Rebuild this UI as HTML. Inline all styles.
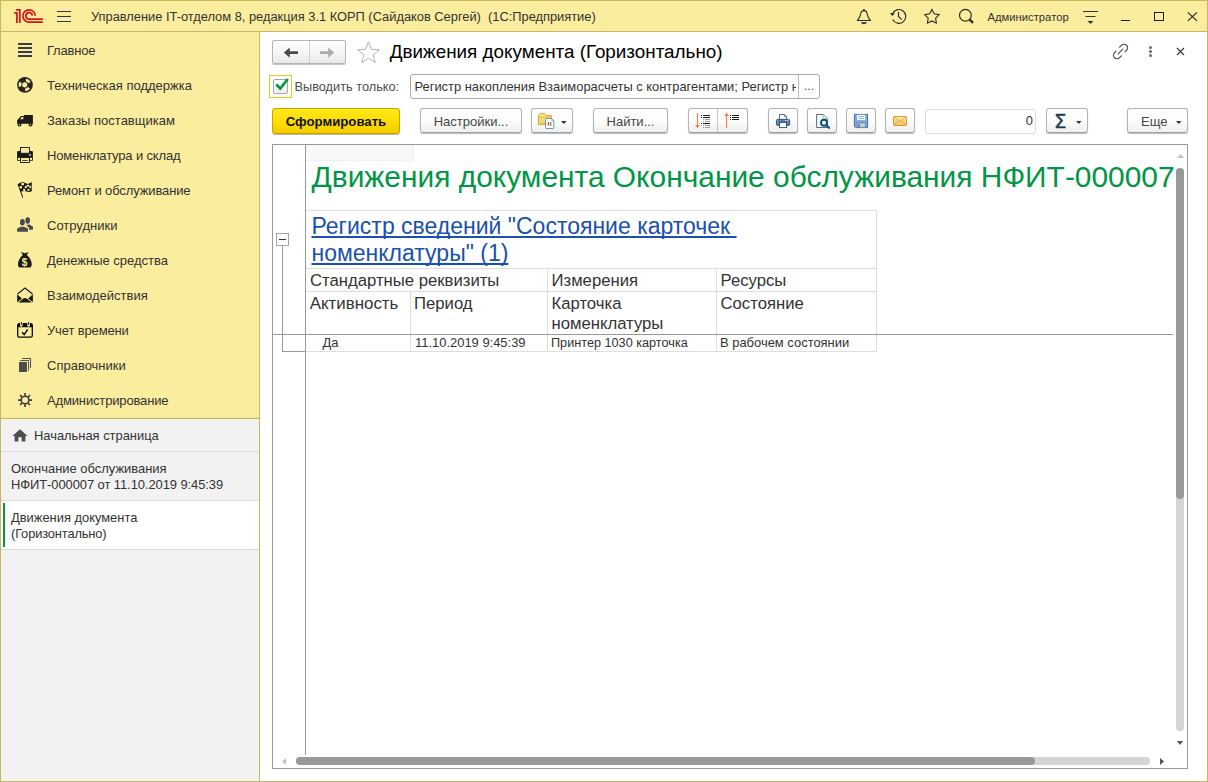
<!DOCTYPE html>
<html lang="ru">
<head>
<meta charset="utf-8">
<title>Движения документа (Горизонтально)</title>
<style>
*{box-sizing:border-box;margin:0;padding:0}
html,body{width:1208px;height:782px;overflow:hidden;background:#fff}
body{font-family:"Liberation Sans",sans-serif;color:#333;position:relative}
.abs{position:absolute}
#win{position:absolute;left:0;top:0;width:1208px;height:782px;border:1px solid #c7b65e;pointer-events:none;z-index:50}
#topbar{position:absolute;left:0;top:0;width:1208px;height:32px;background:#fbed9e;border-bottom:1px solid #c8b86a}
#side{position:absolute;left:0;top:32px;width:260px;height:387px;background:#fbed9e;border-right:1px solid #c7b65e}
#open{position:absolute;left:0;top:418px;width:260px;height:364px;background:#f2f2f2;border-right:1px solid #c7b65e;border-top:1px solid #c0b05a}
.t{position:absolute;white-space:pre;line-height:20px}
.si{position:absolute;left:47px;font-size:13px;color:#333;white-space:pre;line-height:20px}
.ic{position:absolute;left:17px;width:16px;height:16px}
.sep{position:absolute;left:1px;width:258px;height:1px;background:#dcdcdc}
.btn{position:absolute;top:108px;height:25px;border:1px solid #b3b3b3;border-bottom-color:#a2a2a2;border-radius:3px;background:linear-gradient(#ffffff,#fdfdfd 50%,#efefef);box-shadow:0 1px 1px rgba(0,0,0,.28);font-size:13px;color:#444;text-align:center;line-height:25px;white-space:pre}
.gl{position:absolute;background:#dedede}
</style>
</head>
<body>
<div id="topbar">
<svg class="abs" style="left:10px;top:6px" width="36" height="20" viewBox="10 6 36 20">
 <g fill="none" stroke="#d7131b" stroke-width="1.7">
  <path d="M14.1 12.9H16.85V22.9"/>
  <path d="M16.1 9.8H19.8V22.9"/>
  <path d="M35.3 15.8A6.2 6.2 0 1 0 29.1 22.2H42.9"/>
  <path d="M32.3 15.6A3.2 3.2 0 1 0 29.1 19.1H42.9"/>
 </g>
</svg>
<svg class="abs" style="left:57px;top:10px" width="15" height="13" viewBox="0 0 15 13"><path d="M0 1.5H14M0 6.5H14M0 11.5H14" stroke="#333a45" stroke-width="1.1" fill="none"/></svg>
<div class="t" style="left:91px;top:7px;font-size:12.85px;color:#333">Управление IT-отделом 8, редакция 3.1 КОРП (Сайдаков Сергей)  (1С:Предприятие)</div>
<svg class="abs" style="left:856px;top:8px" width="16" height="17" viewBox="0 0 16 17"><path d="M1.3 12.45Q3 10.8 3.7 8.8Q4.5 6.8 4.9 5Q5.4 2.6 7.9 2.6Q10.4 2.6 10.9 5Q11.3 6.8 12.1 8.8Q12.8 10.8 14.5 12.45Z" fill="none" stroke="#2b2b2b" stroke-width="1.1" stroke-linejoin="round"/><circle cx="7.9" cy="1.9" r="0.95" fill="#2b2b2b"/><path d="M4.8 14.2H11Q10.2 16.3 7.9 16.3Q5.6 16.3 4.8 14.2Z" fill="#2b2b2b"/></svg>
<svg class="abs" style="left:889px;top:8px" width="18" height="17" viewBox="0 0 18 17"><g fill="none" stroke="#2b2b2b" stroke-width="1.15"><path d="M3.4 6.1A6.9 6.9 0 1 1 3.7 11.45"/><path d="M9.5 3.9V8.5L12.7 11.6"/></g><path d="M0.9 4.9L6 5.3L3.3 8Z" fill="#2b2b2b"/></svg>
<svg class="abs" style="left:924px;top:8px" width="17" height="17" viewBox="0 0 17 17"><path d="M7.9 1.4L10.19 5.84L15.13 6.65L11.61 10.2L12.37 15.15L7.9 12.9L3.43 15.15L4.19 10.2L0.67 6.65L5.61 5.84Z" fill="none" stroke="#2b2b2b" stroke-width="1.1" stroke-linejoin="miter"/></svg>
<svg class="abs" style="left:958px;top:8px" width="17" height="17" viewBox="0 0 17 17"><circle cx="7.4" cy="7.25" r="5.9" fill="none" stroke="#2b2b2b" stroke-width="1.15"/><path d="M11.7 11.6L15 14.9" stroke="#2b2b2b" stroke-width="2.3"/></svg>
<div class="t" style="left:987.5px;top:6.5px;font-size:11.25px;color:#333">Администратор</div>
<svg class="abs" style="left:1082px;top:9px" width="17" height="16" viewBox="0 0 17 16"><path d="M1 2.5H16M3.5 7.5H13.5" stroke="#333" stroke-width="1.1" fill="none"/><path d="M5.5 12H11.5L8.5 15Z" fill="#333"/></svg>
<div class="abs" style="left:1121px;top:20px;width:9px;height:1px;background:#222"></div>
<div class="abs" style="left:1154px;top:12px;width:10px;height:9px;border:1px solid #222"></div>
<svg class="abs" style="left:1187px;top:12px" width="11" height="10" viewBox="0 0 11 10"><path d="M0.8 0.4L10 8.8M10 0.4L0.8 8.8" stroke="#222" stroke-width="1.1" fill="none"/></svg>
</div>
<div id="side">
<svg class="ic" style="top:10px" viewBox="0 0 16 16"><path d="M1 1H15V3H1ZM1 5H15V7H1ZM1 9H15V11H1ZM1 13H15V15H1Z" fill="#383c4a"/></svg><div class="si" style="top:9px;letter-spacing:-0.2px">Главное</div>
<svg class="ic" style="top:45px" viewBox="0 0 16 16"><circle cx="7.95" cy="7.85" r="7.9" fill="#2b2323"/><circle cx="7.95" cy="7.85" r="5" fill="none" stroke="#fbed9e" stroke-width="2.7" stroke-dasharray="4.36 6.11" stroke-dashoffset="-3.05"/><circle cx="7.7" cy="7.85" r="2.55" fill="#fbed9e"/></svg><div class="si" style="top:44px">Техническая поддержка</div>
<svg class="ic" style="top:80px" viewBox="0 0 16 16"><path d="M7 3.1H15.9V11.7H0.1V8.3L4 4.1H7Z" fill="#1c1c1c"/><path d="M3.1 7.2L4.8 4.9H6.3V7.2Z" fill="#fbed9e"/><circle cx="2.5" cy="12.5" r="1.95" fill="#1c1c1c"/><circle cx="13.5" cy="12.5" r="1.95" fill="#1c1c1c"/><circle cx="2.5" cy="12.6" r="0.7" fill="#fbed9e"/><circle cx="13.5" cy="12.6" r="0.7" fill="#fbed9e"/></svg><div class="si" style="top:79px">Заказы поставщикам</div>
<svg class="ic" style="top:115px" viewBox="0 0 16 16"><path d="M0.1 5.1Q0.1 4.1 1.1 4.1H14.9Q15.9 4.1 15.9 5.1V13.8H0.1Z" fill="#17171a"/><rect x="3.45" y="0.45" width="9" height="5.8" fill="#fbed9e" stroke="#17171a" stroke-width="0.9"/><rect x="0.9" y="10.8" width="2.2" height="2.2" fill="#fbed9e"/><rect x="12.9" y="10.8" width="2.2" height="2.2" fill="#fbed9e"/><rect x="3.45" y="10.6" width="9" height="4.9" fill="#fbed9e" stroke="#17171a" stroke-width="0.9"/><path d="M5.2 13.5H10.7" stroke="#17171a" stroke-width="0.8"/><rect x="11.9" y="6.9" width="2.2" height="2" fill="#a89e6a"/></svg><div class="si" style="top:114px;letter-spacing:-0.15px">Номенклатура и склад</div>
<svg class="ic" style="top:150px" viewBox="0 0 16 16"><path d="M1.06 2.1Q3.6 -0.2 6.2 0.3Q8.6 0.9 10.6 2Q12.6 1.6 14.7 0.1V9.2Q12.4 10.4 9.8 9.6Q6.6 8.4 3.6 10Z" fill="#15140f"/><path d="M1.06 2.1L5.8 15.6" stroke="#15140f" stroke-width="1"/><g fill="#fbed9e"><rect x="4.2" y="1" width="2.9" height="2.2" rx=".6"/><rect x="9.8" y="2.6" width="2.5" height="1.9" rx=".6" transform="rotate(20 11 3.5)"/><rect x="2.6" y="4" width="2.4" height="2.6" rx=".7"/><rect x="7.8" y="3.9" width="2.1" height="2.4" rx=".6" transform="rotate(25 8.9 5)"/><rect x="12.4" y="3.6" width="1.5" height="2.6" rx=".5"/><rect x="6" y="6.8" width="2.4" height="2" rx=".5" transform="rotate(20 7 7.8)"/><rect x="10.6" y="6.7" width="1.7" height="2.2" rx=".5"/></g></svg><div class="si" style="top:149px;letter-spacing:-0.12px">Ремонт и обслуживание</div>
<svg class="ic" style="top:185px" viewBox="0 0 16 16"><g fill="#48484d"><ellipse cx="10.7" cy="3.4" rx="2.35" ry="3.25"/><path d="M9.3 7.9L12.6 7.5L15.95 9.7V12.7H12.1V10.9Z"/><ellipse cx="5.4" cy="5.35" rx="2.4" ry="3.25"/><path d="M0.1 14.7V11.9Q0.1 11.2 0.9 10.9L4 9.8H6.9L10.1 10.9Q10.9 11.2 10.9 11.9V14.7Z"/></g></svg><div class="si" style="top:184px">Сотрудники</div>
<svg class="ic" style="top:220px" viewBox="0 0 16 16"><path d="M4 0.1L7.9 1.3L11.6 0.1L9.8 3Q14.7 7 14.7 12.4Q14.7 15.6 11.5 15.6H4.3Q1.06 15.6 1.06 12.4Q1.06 7 5.8 3Z" fill="#1b1b19"/><text x="7.5" y="14" font-family="Liberation Sans, sans-serif" font-size="10" font-weight="bold" fill="#fbed9e" text-anchor="middle">$</text></svg><div class="si" style="top:219px">Денежные средства</div>
<svg class="ic" style="top:255px" viewBox="0 0 16 16"><path d="M0.5 7L8 1L15.5 7" fill="none" stroke="#1b1b19" stroke-width="1.1"/><path d="M0.1 7.2L4.9 11.4L0.1 15.3Z" fill="#1b1b19"/><path d="M15.9 7.2L11.1 11.4L15.9 15.3Z" fill="#1b1b19"/><path d="M1.3 15.6L6.3 11.5Q8 10.7 9.7 11.5L14.7 15.6Z" fill="#1b1b19"/></svg><div class="si" style="top:254px">Взаимодействия</div>
<svg class="ic" style="top:290px" viewBox="0 0 16 16"><rect x="0.7" y="1.7" width="14.6" height="13.5" rx="1.6" fill="none" stroke="#0c0c0c" stroke-width="1.3"/><path d="M0.7 3Q0.7 1.7 2 1.7H14Q15.3 1.7 15.3 3V5.2H0.7Z" fill="#0c0c0c"/><path d="M4.35 0.4V3.4M11.6 0.4V3.4" stroke="#fbed9e" stroke-width="2.6" stroke-linecap="round"/><path d="M4.35 0V2.9M11.6 0V2.9" stroke="#0c0c0c" stroke-width="0.9"/><path d="M5 10.3L7.2 12.6L10.7 7.4" fill="none" stroke="#0c0c0c" stroke-width="1.5"/></svg><div class="si" style="top:289px;letter-spacing:-0.14px">Учет времени</div>
<svg class="ic" style="top:325px" viewBox="0 0 16 16"><rect x="2.5" y="5.4" width="7" height="9.2" fill="#4d4d4d" stroke="#3c3c46" stroke-width="0.8"/><path d="M3.2 3.5H11.6V13.8" fill="none" stroke="#3c3c46" stroke-width="0.9"/><path d="M5.2 1.5H13.55V10.9" fill="none" stroke="#3c3c46" stroke-width="0.9"/></svg><div class="si" style="top:324px">Справочники</div>
<svg class="ic" style="top:360px" viewBox="0 0 16 16"><g stroke="#3a3d48" fill="none"><circle cx="8.05" cy="8.05" r="3.85" stroke-width="1.6"/><path d="M8.05 1.05V3.8M8.05 12.3V15.05M1.05 8.05H3.8M12.3 8.05H15.05M3.1 3.1L5 5M11.1 11.1L13 13M3.1 13L5 11.1M11.1 5L13 3.1" stroke-width="1.7"/></g></svg><div class="si" style="top:359px;letter-spacing:-0.15px">Администрирование</div>
</div>
<div id="open">
<svg class="abs" style="left:12px;top:10px" width="16" height="13" viewBox="0 0 16 13"><path d="M8 0.2L15.6 7H13.4V12.6H9.6V8.2H6.4V12.6H2.6V7H0.4Z" fill="#4d4d4d"/></svg>
<div class="t" style="left:34px;top:7px;font-size:12.9px;color:#333">Начальная страница</div>
<div class="sep" style="top:32px"></div>
<div class="t" style="left:11px;top:42px;font-size:12.95px;color:#333;line-height:16px">Окончание обслуживания
<span style="letter-spacing:-0.07px">НФИТ-000007 от 11.10.2019 9:45:39</span></div>
<div class="sep" style="top:81px"></div>
<div class="abs" style="left:1px;top:82px;width:258px;height:48px;background:#fff"></div>
<div class="abs" style="left:3px;top:84px;width:2px;height:44px;background:#009646"></div>
<div class="t" style="left:11px;top:91px;font-size:12.9px;color:#333;line-height:16px">Движения документа
<span style="letter-spacing:-0.15px">(Горизонтально)</span></div>
<div class="sep" style="top:130px"></div>
</div>
<div id="main">
<!-- nav buttons -->
<div class="abs" style="left:272px;top:40px;width:74px;height:24px;border:1px solid #b4b4b4;border-radius:2px;background:linear-gradient(#fff,#f4f4f4 60%,#e8e8e8);box-shadow:0 1px 0 rgba(0,0,0,.22)"></div>
<div class="abs" style="left:309px;top:41px;width:1px;height:22px;background:#cfcfcf"></div>
<svg class="abs" style="left:283px;top:47px" width="16" height="12" viewBox="0 0 16 12"><path d="M0.8 5.6L6.8 0.4V4.2H15V7H6.8V10.8Z" fill="#4a4a4a"/></svg>
<svg class="abs" style="left:319px;top:47px" width="16" height="12" viewBox="0 0 16 12"><path d="M15.2 5.6L9.2 0.4V4.2H1V7H9.2V10.8Z" fill="#ababab"/></svg>
<svg class="abs" style="left:356px;top:40px" width="25" height="24" viewBox="0 0 25 24"><path d="M12.5 2L15.4 9.3L23.4 9.8L17.2 14.9L19.2 22.6L12.5 18.3L5.8 22.6L7.8 14.9L1.6 9.8L9.6 9.3Z" fill="#fff" stroke="#aab3bb" stroke-width="1"/></svg>
<div class="t" style="left:389.8px;top:40px;font-size:18.85px;color:#000;line-height:24px">Движения документа (Горизонтально)</div>
<svg class="abs" style="left:1112px;top:43px" width="17" height="17" viewBox="0 0 17 17"><g fill="none" stroke="#4a4a4a" stroke-width="1.2" stroke-linecap="round"><path d="M6.2 10.8L10.8 6.2"/><path d="M7.6 4.2L9.4 2.4A3.4 3.4 0 0 1 14.6 7.2L13 8.8"/><path d="M9.4 12.8L7.6 14.6A3.4 3.4 0 0 1 2.4 9.8L4 8.2"/></g></svg>
<div class="abs" style="left:1149px;top:46px;width:3px;height:3px;border-radius:50%;background:#6a6a6a"></div>
<div class="abs" style="left:1149px;top:50px;width:3px;height:3px;border-radius:50%;background:#6a6a6a"></div>
<div class="abs" style="left:1149px;top:54px;width:3px;height:3px;border-radius:50%;background:#6a6a6a"></div>
<svg class="abs" style="left:1176px;top:47px" width="9" height="9" viewBox="0 0 9 9"><path d="M1 1L8 8M8 1L1 8" stroke="#333" stroke-width="1.1" fill="none"/></svg>

<!-- checkbox row -->
<div class="abs" style="left:269px;top:75px;width:23px;height:23px;border:1px solid #f2c518"></div>
<div class="abs" style="left:273px;top:79px;width:15px;height:15px;border:1px solid #a8a8a8;border-radius:2px;background:linear-gradient(#fff,#f1f1f1)"></div>
<svg class="abs" style="left:274px;top:77px" width="16" height="16" viewBox="0 0 16 16"><path d="M2.3 7.5L6.3 11.5L13.8 2" fill="none" stroke="#009646" stroke-width="2.7"/></svg>
<div class="t" style="left:294.5px;top:77px;font-size:12.75px;color:#4d4d4d">Выводить только:</div>
<div class="abs" style="left:410px;top:74px;width:410px;height:25px;border:1px solid #a9a9a9;border-radius:3px;background:#fff"></div>
<div class="t" style="left:414.5px;top:76.5px;font-size:12.9px;color:#333;width:381.5px;overflow:hidden">Регистр накопления Взаиморасчеты с контрагентами; Регистр накопления</div>
<div class="abs" style="left:798px;top:75px;width:1px;height:23px;background:#b9b9b9"></div>
<div class="t" style="left:804px;top:76px;font-size:12px;color:#444">...</div>

<!-- toolbar -->
<div class="btn" style="left:272px;width:128px;height:26px;border-color:#c2a300;background:linear-gradient(#ffe81a,#ffdc00 55%,#f2cc00);font-weight:bold;color:#111;line-height:25px;font-size:13.2px;box-shadow:0 1px 0 rgba(120,100,0,.45)">Сформировать</div>
<div class="btn" style="left:420px;width:102px">Настройки...</div>
<div class="btn" style="left:531px;width:42px"></div>
<div class="btn" style="left:593px;width:75px">Найти...</div>
<div class="btn" style="left:688px;width:60px"></div>
<div class="abs" style="left:717px;top:109px;width:1px;height:23px;background:#c4c4c4"></div>
<div class="btn" style="left:768px;width:30px"></div>
<div class="btn" style="left:807px;width:30px"></div>
<div class="btn" style="left:846px;width:30px"></div>
<div class="btn" style="left:885px;width:30px"></div>
<div class="abs" style="left:925px;top:109px;width:111px;height:25px;border:1px solid #dcdcdc;border-radius:3px;background:#fff"></div>
<div class="t" style="left:1000px;top:111px;width:33px;text-align:right;font-size:12.9px;color:#333">0</div>
<div class="btn" style="left:1046px;width:42px"></div>
<div class="btn" style="left:1127px;width:61px;text-align:left;padding-left:13px">Еще</div>


<!-- toolbar icons -->
<svg class="abs" style="left:561px;top:121px" width="6" height="3" viewBox="0 0 6 3"><path d="M0 0H5.6L2.8 3Z" fill="#333"/></svg>
<svg class="abs" style="left:1076px;top:121px" width="6" height="3" viewBox="0 0 6 3"><path d="M0 0H5.6L2.8 3Z" fill="#333"/></svg>
<svg class="abs" style="left:1176px;top:121px" width="6" height="3" viewBox="0 0 6 3"><path d="M0 0H5.6L2.8 3Z" fill="#333"/></svg>
<div class="t" style="left:1054.3px;top:108px;font-family:'DejaVu Sans',sans-serif;font-size:19px;color:#1f3a52;-webkit-text-stroke:0.35px #1f3a52;line-height:26px;transform:scaleX(1.04);transform-origin:0 0">Σ</div>
<svg class="abs" style="left:537px;top:112px" width="19" height="18" viewBox="0 0 19 18">
 <defs><linearGradient id="gf" x1="0" y1="0" x2="0" y2="1"><stop offset="0" stop-color="#fdf196"/><stop offset="1" stop-color="#f3c95c"/></linearGradient></defs>
 <path d="M1.5 12.6V3.3L3.6 1.4H7.4L9.3 3.6H14.4V12.6Z" fill="url(#gf)" stroke="#d49a2a" stroke-width="0.9" stroke-linejoin="round"/>
 <path d="M1.5 5.2H14.4" stroke="#dba63a" stroke-width="0.8"/>
 <path d="M9.4 6.5H14.6L16.8 8.8V15.6Q16.8 16.5 15.9 16.5H9.4Q8.5 16.5 8.5 15.6V7.4Q8.5 6.5 9.4 6.5Z" fill="#fff" stroke="#7a94a8" stroke-width="1"/>
 <path d="M14.4 6.6V9H16.8Z" fill="#9db2c4"/>
 <rect x="10.8" y="10" width="1.3" height="3" fill="#e8312f"/><rect x="13" y="10" width="1.3" height="3" fill="#2eb24a"/>
 <path d="M10.2 13.4H15" stroke="#9a9a9a" stroke-width="0.6"/>
</svg>
<svg class="abs" style="left:694px;top:112px" width="18" height="17" viewBox="694 112 18 17">
 <path d="M697.5 113V126" stroke="#f0834a" stroke-width="1.1"/><path d="M695 125H700L697.5 128.2Z" fill="#f0834a"/>
 <g fill="#1a1a1a"><rect x="701" y="115" width="1" height="1"/><rect x="703" y="115" width="7" height="1"/><rect x="701" y="117" width="1" height="1"/><rect x="703" y="117" width="7" height="1"/><rect x="701" y="123" width="1" height="1"/><rect x="703" y="123" width="7" height="1"/></g>
 <g fill="#9a9a9a"><rect x="703" y="119" width="1" height="1"/><rect x="705" y="119" width="5" height="1"/><rect x="703" y="121" width="1" height="1"/><rect x="705" y="121" width="5" height="1"/><rect x="703" y="125" width="1" height="1"/><rect x="705" y="125" width="5" height="1"/><rect x="703" y="127" width="1" height="1"/><rect x="705" y="127" width="5" height="1"/></g>
</svg>
<svg class="abs" style="left:723px;top:112px" width="18" height="17" viewBox="723 112 18 17">
 <path d="M726.5 115V128" stroke="#f0834a" stroke-width="1.1"/><path d="M724 116H729L726.5 112.8Z" fill="#f0834a"/>
 <g fill="#1a1a1a"><rect x="730" y="115" width="1" height="1"/><rect x="732" y="115" width="7" height="1"/><rect x="730" y="117" width="1" height="1"/><rect x="732" y="117" width="7" height="1"/><rect x="730" y="119" width="1" height="1"/><rect x="732" y="119" width="7" height="1"/></g>
</svg>
<svg class="abs" style="left:775px;top:113px" width="16" height="16" viewBox="775 113 16 16">
 <defs><linearGradient id="gp" x1="0" y1="0" x2="0" y2="1"><stop offset="0" stop-color="#7fa3cc"/><stop offset="1" stop-color="#4d78a8"/></linearGradient></defs>
 <path d="M779.5 119.5V114.5H784.6L786.6 116.6V119.5Z" fill="#fff" stroke="#3f5f85" stroke-width="0.9"/>
 <path d="M784.4 114.6V116.8H786.6" fill="none" stroke="#3f5f85" stroke-width="0.7"/>
 <rect x="776.4" y="119.4" width="13.3" height="6" rx="1.2" fill="url(#gp)" stroke="#2c4f78" stroke-width="0.9"/>
 <path d="M777.6 121.2H788.6" stroke="#2c4f78" stroke-width="0.8"/>
 <rect x="785" y="120.1" width="1" height="0.8" fill="#fff"/><rect x="787" y="120.1" width="1" height="0.8" fill="#fff"/>
 <rect x="779.5" y="122.6" width="7.1" height="5" fill="#fff" stroke="#2c4f78" stroke-width="0.9"/>
</svg>
<svg class="abs" style="left:815px;top:113px" width="16" height="16" viewBox="815 113 16 16">
 <path d="M816.6 127.5V114.5H823.4L827.4 118.6V127.5Z" fill="#f7f8fa" stroke="#3f5f85" stroke-width="0.9"/>
 <path d="M823.2 114.6V118.8H827.4" fill="#fff" stroke="#8a9db4" stroke-width="0.7"/>
 <circle cx="824" cy="122.7" r="3" fill="#fff" stroke="#0b4f7c" stroke-width="1.9"/>
 <path d="M826.4 125.2L829 127.8" stroke="#0b4f7c" stroke-width="2.2" stroke-linecap="round"/>
</svg>
<svg class="abs" style="left:853px;top:113px" width="16" height="16" viewBox="853 113 16 16">
 <path d="M854.4 114.4H867.6V127.6H855.4L854.4 126.6Z" fill="#7ea7dc" stroke="#3a64a0" stroke-width="0.9"/>
 <rect x="857" y="114.8" width="8.2" height="5.3" fill="#fff"/>
 <path d="M858.2 116.5H864M858.2 118.5H864" stroke="#7ea7dc" stroke-width="0.8"/>
 <rect x="857" y="123" width="8.4" height="4.6" fill="#c9d1d0" stroke="#4d73a6" stroke-width="0.6"/>
 <rect x="858.2" y="124.2" width="1.6" height="2.9" fill="#3a6cb0"/>
</svg>
<svg class="abs" style="left:892px;top:115px" width="16" height="12" viewBox="892 115 16 12">
 <defs><linearGradient id="gm" x1="0" y1="0" x2="0" y2="1"><stop offset="0" stop-color="#fce9b4"/><stop offset="1" stop-color="#f2bf5c"/></linearGradient></defs>
 <rect x="893.5" y="116.4" width="13" height="9.1" rx="1.4" fill="url(#gm)" stroke="#d8982c" stroke-width="1"/>
 <path d="M894 117L900 121.6L906 117M894.2 125L898.6 120.6M905.8 125L901.4 120.6" fill="none" stroke="#dba445" stroke-width="0.8"/>
</svg>
<!-- spreadsheet frame -->
<div class="abs" style="left:272px;top:144px;width:916px;height:625px;border:1px solid #999;background:#fff"></div>
<div class="abs" style="left:305px;top:145px;width:1px;height:610px;background:#999"></div>
<div class="abs" style="left:306px;top:145px;width:108px;height:16px;background:#f8f8f8;border-right:1px solid #f0f0f0;border-bottom:1px solid #f0f0f0"></div>
<div class="t" style="left:311.5px;top:157px;font-size:29.92px;color:#009646;line-height:40px">Движения документа Окончание обслуживания НФИТ-000007</div>
<!-- grid lines -->
<div class="gl" style="left:306px;top:210px;width:571px;height:1px"></div>
<div class="gl" style="left:306px;top:268px;width:571px;height:1px"></div>
<div class="gl" style="left:306px;top:291px;width:571px;height:1px"></div>
<div class="gl" style="left:306px;top:351px;width:571px;height:1px"></div>
<div class="gl" style="left:876px;top:210px;width:1px;height:142px"></div>
<div class="gl" style="left:410px;top:291px;width:1px;height:60px"></div>
<div class="gl" style="left:547px;top:268px;width:1px;height:83px"></div>
<div class="gl" style="left:716px;top:268px;width:1px;height:83px"></div>
<div class="abs" style="left:273px;top:334px;width:900px;height:1px;background:#999"></div>
<!-- group bracket -->
<div class="abs" style="left:282px;top:245px;width:1px;height:107px;background:#999"></div>
<div class="abs" style="left:282px;top:351px;width:23px;height:1px;background:#999"></div>
<div class="abs" style="left:276px;top:233px;width:13px;height:13px;border:1px solid #a6a6a6;background:#fff"></div>
<div class="abs" style="left:279px;top:239px;width:7px;height:1px;background:#333"></div>
<!-- link -->
<div class="t" style="left:311.5px;top:212px;font-size:23px;color:#1a50b0;line-height:28px;text-decoration:underline;text-decoration-skip-ink:none;text-decoration-thickness:2px;text-underline-offset:2px">Регистр сведений "Состояние карточек </div>
<div class="t" style="left:311.5px;top:238.5px;font-size:23px;color:#1a50b0;line-height:28px;text-decoration:underline;text-decoration-skip-ink:none;text-decoration-thickness:2px;text-underline-offset:1.5px">номенклатуры" (1)</div>
<!-- headers -->
<div class="t" style="left:310px;top:271px;font-size:16.7px;color:#333;line-height:20px">Стандартные реквизиты</div>
<div class="t" style="left:551.5px;top:271px;font-size:16.7px;color:#333;line-height:20px">Измерения</div>
<div class="t" style="left:720.5px;top:271px;font-size:16.7px;color:#333;line-height:20px">Ресурсы</div>
<div class="t" style="left:309.7px;top:294px;font-size:16.9px;color:#333;line-height:20px">Активность</div>
<div class="t" style="left:414px;top:294px;font-size:16.7px;color:#333;line-height:20px">Период</div>
<div class="t" style="left:551.5px;top:294px;font-size:16.7px;color:#333;line-height:20px">Карточка
номенклатуры</div>
<div class="t" style="left:720.5px;top:294px;font-size:16.7px;color:#333;line-height:20px">Состояние</div>
<!-- data -->
<div class="t" style="left:322.5px;top:335px;font-size:12.95px;color:#333;line-height:16px">Да</div>
<div class="t" style="left:415px;top:335px;font-size:12.95px;color:#333;line-height:16px">11.10.2019 9:45:39</div>
<div class="t" style="left:551px;top:335px;font-size:12.68px;color:#333;line-height:16px">Принтер 1030 карточка</div>
<div class="t" style="left:720px;top:335px;font-size:12.95px;color:#333;line-height:16px">В рабочем состоянии</div>
<!-- scrollbars -->
<svg class="abs" style="left:1177px;top:154px" width="7" height="4" viewBox="0 0 7 4"><path d="M0 4H7L3.5 0Z" fill="#c4c4c4"/></svg>
<div class="abs" style="left:1176px;top:168px;width:8px;height:563px;border-radius:4px;background:#d5d5d5"></div>
<div class="abs" style="left:1176px;top:168px;width:8px;height:331px;border-radius:4px;background:#999"></div>
<svg class="abs" style="left:1177px;top:741px" width="6" height="4" viewBox="0 0 6 4"><path d="M0 0H6L3 4Z" fill="#555"/></svg>
<svg class="abs" style="left:282px;top:758px" width="4" height="7" viewBox="0 0 4 7"><path d="M4 0V7L0 3.5Z" fill="#c4c4c4"/></svg>
<div class="abs" style="left:296px;top:757px;width:854px;height:8px;border-radius:4px;background:#d5d5d5"></div>
<div class="abs" style="left:296px;top:757px;width:739px;height:8px;border-radius:4px;background:#999"></div>
<svg class="abs" style="left:1160px;top:758px" width="4" height="7" viewBox="0 0 4 7"><path d="M0 0V7L4 3.5Z" fill="#555"/></svg>
</div>
<div id="win"></div>
</body>
</html>
